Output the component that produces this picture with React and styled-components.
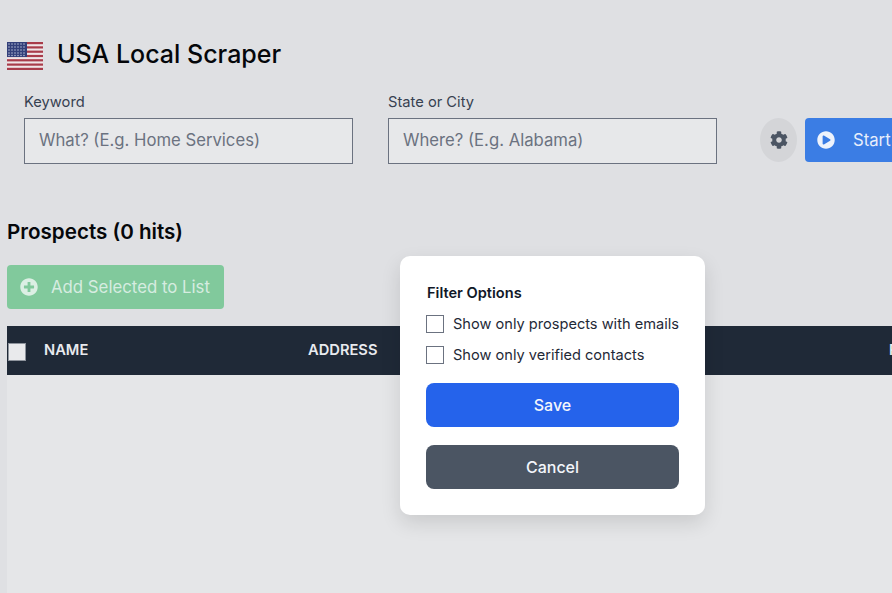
import React from 'react';
import styled, { createGlobalStyle } from 'styled-components';
import { FaCog, FaPlayCircle, FaPlusCircle } from 'react-icons/fa';

const GlobalStyle = createGlobalStyle`
  html, body {
    margin: 0;
    padding: 0;
    background: #dfe0e3;
    font-family: Inter, "Liberation Sans", sans-serif;
    overflow: hidden;
  }
`;

const Page = styled.div`
  position: relative;
  width: 892px;
  height: 593px;
  overflow: hidden;
  display: flex;
  flex-direction: column;
`;

const TitleRow = styled.div`
  display: flex;
  align-items: flex-start;
  gap: 14px;
  height: 28px;
  margin: 42px 0 0 7px;
`;

const Title = styled.h1`
  margin: 0;
  font-size: 25px;
  line-height: 25px;
  font-weight: 500;
  color: #05070a;
  white-space: nowrap;
`;

const FormRow = styled.div`
  display: flex;
  align-items: flex-end;
  margin: 23px 0 0 24px;
  width: 1000px;
`;

const Field = styled.label`
  display: flex;
  flex-direction: column;
  gap: 7px;
  width: 329px;
  margin-right: 35px;
  font-size: 14.7px;
  color: #374151;
`;

const TextInput = styled.input`
  box-sizing: border-box;
  width: 100%;
  height: 46px;
  padding: 0 14px 2px;
  border: 1px solid #6b7280;
  background: #e7e8ea;
  font: inherit;
  font-size: 16.7px;
  outline: none;
  &::placeholder { color: #6b7280; opacity: 1; }
`;

const GearButton = styled.button`
  width: 37px;
  height: 44px;
  margin: 0 8px 2px 8px;
  border: 0;
  padding: 0;
  border-radius: 50%;
  background: #d4d5d8;
  color: #4b5563;
  display: flex;
  align-items: center;
  justify-content: center;
  font-size: 18px;
`;

const StartButton = styled.button`
  height: 44px;
  width: 180px;
  margin-bottom: 2px;
  border: 0;
  border-radius: 4px;
  padding: 0 12px;
  background: #3b7de4;
  color: #e8eefb;
  display: flex;
  align-items: center;
  gap: 18px;
  font: inherit;
  font-size: 16.7px;
  svg { font-size: 18px; color: #eef3fc; }
`;

const SectionTitle = styled.h2`
  margin: 56px 0 0 7px;
  font-size: 20.6px;
  line-height: 24px;
  font-weight: 600;
  color: #05070a;
`;

const AddButton = styled.button`
  display: flex;
  align-items: center;
  gap: 13px;
  width: 217px;
  height: 44px;
  margin: 21px 0 0 7px;
  padding: 0 13px;
  border: 0;
  border-radius: 4px;
  background: #81c99c;
  color: #d6ece0;
  font: inherit;
  font-size: 16.8px;
  white-space: nowrap;
  svg { font-size: 18px; color: #dcefe4; flex: none; }
`;

const TableArea = styled.div`
  flex: 1;
  margin: 17px 0 0 7px;
  background: #e5e6e8;
`;

const HeaderRow = styled.div`
  box-sizing: border-box;
  display: grid;
  grid-template-columns: 37px 264px 581px 100px;
  align-items: center;
  width: 1000px;
  height: 49px;
  padding-bottom: 2px;
  background: #1f2937;
  color: #e8eaee;
  font-size: 14.7px;
  font-weight: 600;
`;

const HeaderBox = styled.span`
  display: block;
  width: 18px;
  height: 18px;
  margin: 4px 0 0 1px;
  background: #e9eaec;
  border: 1px solid #8d939c;
  box-sizing: border-box;
`;

const Modal = styled.div`
  position: absolute;
  left: 400px;
  top: 256px;
  box-sizing: border-box;
  width: 305px;
  height: 259px;
  padding: 28px 26px 26px;
  border-radius: 10px;
  background: #fff;
  box-shadow: 0 8px 20px rgba(0, 0, 0, 0.12);
`;

const ModalTitle = styled.div`
  font-size: 14.6px;
  line-height: 18px;
  font-weight: 600;
  color: #111827;
  margin-bottom: 12px;
  padding-left: 1px;
`;

const OptionRow = styled.label`
  display: flex;
  align-items: center;
  gap: 9px;
  height: 19px;
  margin-bottom: 12px;
  font-size: 14.6px;
  color: #1f2937;
  white-space: nowrap;
`;

const OptionBox = styled.span`
  box-sizing: border-box;
  width: 18px;
  height: 18px;
  border: 1px solid #6b7280;
  background: #fff;
`;

const ModalButton = styled.button`
  display: block;
  width: 253px;
  height: 44px;
  margin-top: ${props => props.$gap}px;
  border: 0;
  border-radius: 8px;
  background: ${props => props.$bg};
  color: #f3f6fb;
  font: inherit;
  font-size: 16px;
  font-weight: 500;
`;

const UsFlag = () => (
  <svg width="36" height="28" viewBox="0 0 36 28">
    <rect width="36" height="28" fill="#efe6e8" />
    {[0, 1, 2, 3, 4, 5, 6].map(i => (
      <rect key={i} y={i * 4.3} width="36" height="2.2" fill="#a83c4a" />
    ))}
    <rect width="20" height="15" fill="#33407a" />
    {[2, 5, 8, 11, 14, 17].flatMap(x =>
      [2, 5, 8, 11, 13.5].map(y => (
        <circle key={`${x}-${y}`} cx={x} cy={y} r="0.7" fill="#c9cfe4" />
      ))
    )}
  </svg>
);

export default function App() {
  return (
    <Page>
      <GlobalStyle />
      <TitleRow>
        <UsFlag />
        <Title>USA Local Scraper</Title>
      </TitleRow>

      <FormRow>
        <Field>
          Keyword
          <TextInput placeholder="What? (E.g. Home Services)" />
        </Field>
        <Field>
          State or City
          <TextInput placeholder="Where? (E.g. Alabama)" />
        </Field>
        <GearButton><FaCog /></GearButton>
        <StartButton><FaPlayCircle />Start</StartButton>
      </FormRow>

      <SectionTitle>Prospects (0 hits)</SectionTitle>
      <AddButton><FaPlusCircle />Add Selected to List</AddButton>

      <TableArea>
        <HeaderRow>
          <HeaderBox />
          <span>NAME</span>
          <span>ADDRESS</span>
          <span>PHONE</span>
        </HeaderRow>
      </TableArea>

      <Modal>
        <ModalTitle>Filter Options</ModalTitle>
        <OptionRow><OptionBox />Show only prospects with emails</OptionRow>
        <OptionRow><OptionBox />Show only verified contacts</OptionRow>
        <ModalButton $bg="#2563eb" $gap={19}>Save</ModalButton>
        <ModalButton $bg="#4b5563" $gap={18}>Cancel</ModalButton>
      </Modal>
    </Page>
  );
}
